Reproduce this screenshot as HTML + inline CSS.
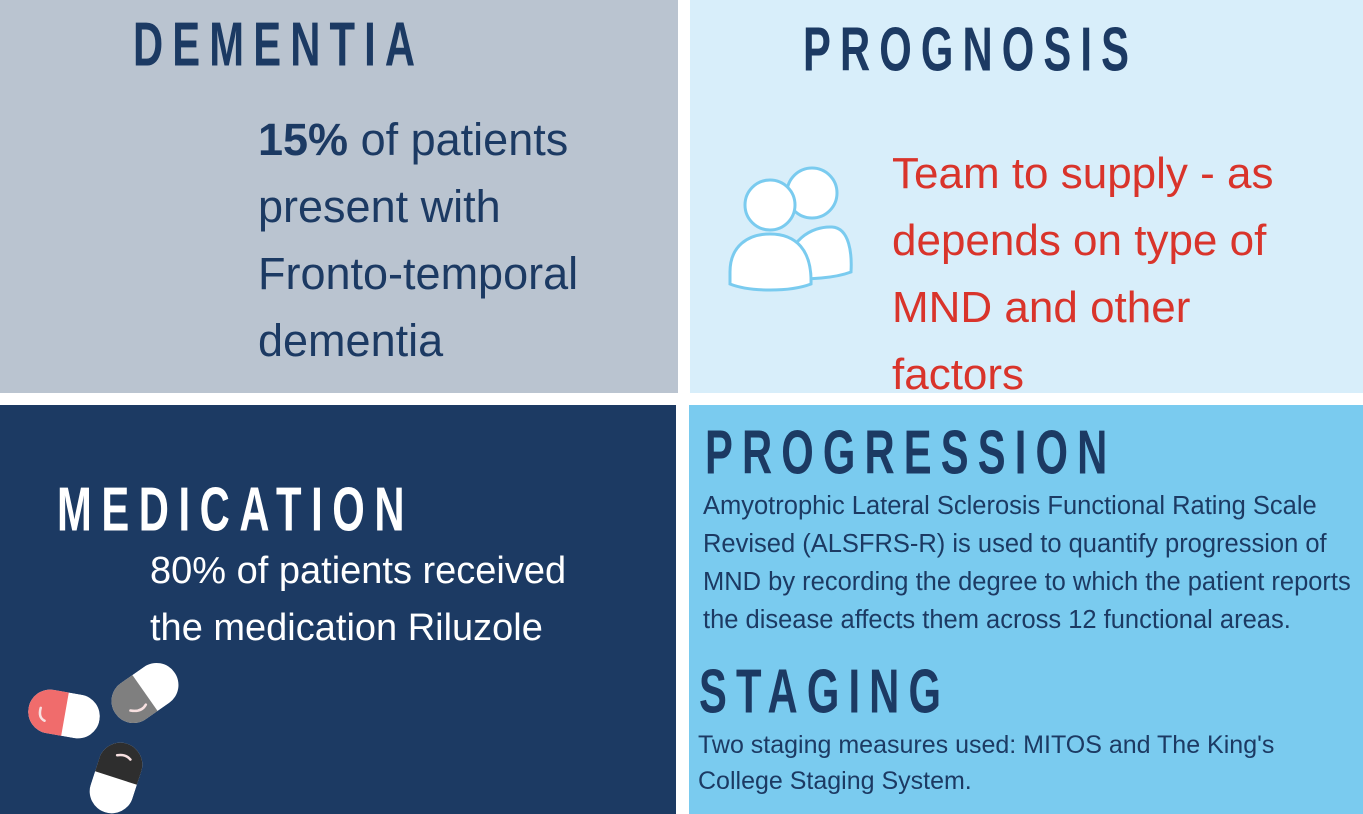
<!DOCTYPE html>
<html><head><meta charset="utf-8"><style>
html,body{margin:0;padding:0;}
body{width:1363px;height:814px;position:relative;background:#fff;overflow:hidden;font-family:"Liberation Sans",sans-serif;}
.p{position:absolute;}
.h{position:absolute;font-weight:700;font-size:48px;line-height:48px;white-space:nowrap;transform-origin:left top;transform:scale(0.87,1.3);letter-spacing:10.5px;color:#1c3a63;}
.t{position:absolute;white-space:nowrap;}
</style></head><body>
<div class="p" style="left:0;top:0;width:678px;height:393px;background:#bac4d0"></div>
<div class="p" style="left:690px;top:0;width:673px;height:393px;background:#d8eefa"></div>
<div class="p" style="left:0;top:405px;width:676px;height:409px;background:#1c3a63"></div>
<div class="p" style="left:689px;top:405px;width:674px;height:409px;background:#7acbef"></div>

<div class="h" style="left:133px;top:15px">DEMENTIA</div>
<div class="h" style="left:803px;top:20px">PROGNOSIS</div>
<div class="h" style="left:57px;top:480px;color:#fff;letter-spacing:11px">MEDICATION</div>
<div class="h" style="left:705px;top:423px">PROGRESSION</div>
<div class="h" style="left:699px;top:662px">STAGING</div>

<div class="t" style="left:258px;top:106px;font-size:45px;line-height:67px;color:#1c3a63"><b>15%</b> of patients<br>present with<br>Fronto-temporal<br>dementia</div>

<div class="t" style="left:892px;top:140px;font-size:44px;line-height:67px;color:#d9342b">Team to supply - as<br>depends on type of<br>MND and other<br>factors</div>

<div class="t" style="left:150px;top:543px;font-size:38px;line-height:57px;color:#fff">80% of patients received<br>the medication Riluzole</div>

<div class="t" style="left:703px;top:487px;font-size:25.5px;line-height:38px;color:#1c3a63">Amyotrophic Lateral Sclerosis Functional Rating Scale<br>Revised (ALSFRS-R) is used to quantify progression of<br>MND by recording the degree to which the patient reports<br>the disease affects them across 12 functional areas.</div>

<div class="t" style="left:698px;top:727px;font-size:25px;line-height:36px;color:#1c3a63">Two staging measures used: MITOS and The King's<br>College Staging System.</div>

<svg class="p" style="left:720px;top:160px" width="140" height="140" viewBox="0 0 140 140">
<g fill="#fff" stroke="#7acbef" stroke-width="3">
<path d="M64 118 C66 80 92 66 112 67 C130 68 132 95 131 112 C115 118 90 120 64 118 Z"/>
<circle cx="92" cy="33" r="25"/>
<path d="M10 112 C10 86 28 74 50 74 C76 74 92 90 91 124 C70 132 30 132 10 124 Z"/>
<circle cx="50" cy="45" r="25"/>
</g></svg>

<svg class="p" style="left:0;top:640px" width="200" height="174" viewBox="0 0 200 174">
<defs>
<clipPath id="c1"><rect x="-36" y="-22" width="72" height="44" rx="22"/></clipPath>
</defs>
<g transform="translate(64,74) rotate(10)">
<g clip-path="url(#c1)"><rect x="-36" y="-22" width="72" height="44" fill="#fff"/><rect x="-36" y="-22" width="37" height="44" fill="#f06c6c"/></g>
<path d="M-24 -2 Q-25 8 -18 10" stroke="#f7e0e0" stroke-width="2.5" fill="none" stroke-linecap="round"/>
</g>
<g transform="translate(145,53) rotate(-35)">
<g clip-path="url(#c1)"><rect x="-36" y="-22" width="72" height="44" fill="#fff"/><rect x="-36" y="-22" width="36" height="44" fill="#7f7f7f"/></g>
<path d="M-22 6 Q-14 14 -6 10" stroke="#f7e0e0" stroke-width="2.5" fill="none" stroke-linecap="round"/>
</g>
<g transform="translate(116,138) rotate(-72)">
<g clip-path="url(#c1)"><rect x="-36" y="-22" width="72" height="44" fill="#fff"/><rect x="0" y="-22" width="36" height="44" fill="#2e2e2e"/></g>
<path d="M22 -6 Q26 2 22 8" stroke="#f7e0e0" stroke-width="2.5" fill="none" stroke-linecap="round"/>
</g>
</svg>
</body></html>
